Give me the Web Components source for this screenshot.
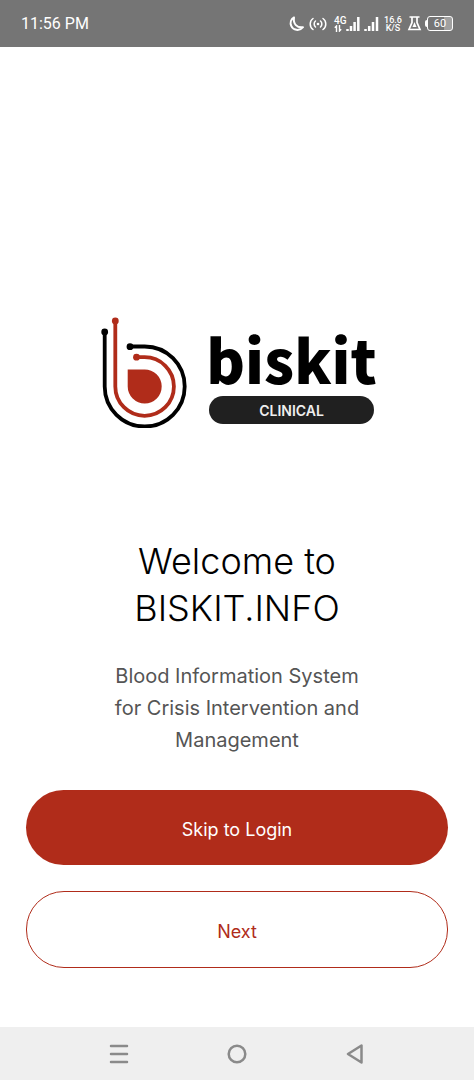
<!DOCTYPE html>
<html lang="en">
<head>
<meta charset="utf-8">
<meta name="viewport" content="width=device-width, initial-scale=1">
<title>BISKIT.INFO</title>
<style>
  html, body { height: 100%; margin: 0; background: #fff; }
  body { font-family: Inter, "Liberation Sans", sans-serif; }
</style>
</head>
<body>
<welcome-screen></welcome-screen>
<script>
const define = (name, html) => {
  const template = document.createElement('template');
  template.innerHTML = html;
  customElements.define(name, class extends HTMLElement {
    constructor() {
      super();
      this.attachShadow({ mode: 'open' }).append(template.content.cloneNode(true));
    }
  });
};

define('status-bar', `
  <style>
    :host { display: flex; align-items: center; justify-content: space-between; height: 47px;
      padding: 0 21px; background: #757575; color: #fff; font-family: Roboto, sans-serif; font-size: 16px; box-sizing: border-box; }
    .icons { display: flex; align-items: center; }
    svg { display: block; fill: none; stroke: #fff; }
    .gen, .speed { font-weight: 500; font-size: 10px; line-height: 9px; text-align: center; }
    .gen { display: grid; justify-items: start; margin-left: 7px; width: 12px; }
    .speed { font-size: 9px; line-height: 8px; margin-left: 5px; width: 18px; }
    .battery { display: flex; align-items: center; margin-left: 3px; }
    .cell { box-sizing: border-box; width: 26px; height: 15px; border: 1px solid #fff; border-radius: 3px;
      font-size: 11px; line-height: 14px; text-align: center; background: linear-gradient(90deg, #757575 65%, #a0a0a0 65%); }
    .cap { width: 2px; height: 7px; border-radius: 2px 0 0 2px; background: #fff; }
  </style>
  <time>11:56 PM</time>
  <div class="icons">
    <svg width="16" height="16" viewBox="0 0 16 16" stroke-width="2" stroke-linejoin="round"><path d="M5 1.500C2 3 .8 6.500 2.300 10 4 14.300 10.500 15.500 14 11.200 8 12 4 8 5 1.500Z"/></svg>
    <svg style="margin-left:4px" width="18" height="14" viewBox="0 0 18 14" stroke-width="1.500" stroke-linecap="round"><path d="M4 1.500C.3 4 .3 10 4 12.500M6.500 4C4.700 5.500 4.700 8.500 6.500 10M14 1.500C17.700 4 17.700 10 14 12.500M11.500 4C13.300 5.500 13.300 8.500 11.500 10"/><circle cx="9" cy="7" r="1.300" fill="#fff" stroke="none"/></svg>
    <div class="gen"><span>4G</span><svg width="8" height="7" viewBox="0 0 8 7" stroke-width="1.400"><path d="M2.500 7V1L.8 2.700M5.500 0V6L7.200 4.300"/></svg></div>
    <svg width="14" height="16" viewBox="0 0 14 16" stroke-width="2.500"><path d="M1.500 15V13M5 15V10M8.600 15V6M12.300 15V1"/></svg>
    <svg style="margin-left:4px" width="15" height="16" viewBox="0 0 15 16" stroke-width="2.500"><path d="M1.500 15V13M5.200 15V10M9 15V6M13 15V1"/></svg>
    <div class="speed">16.6<br>K/S</div>
    <svg style="margin-left:5px" width="15" height="15" viewBox="0 0 15 15" stroke-width="1.700"><path d="M2.500 1H12.500M5 1V6.500L2 13.500H13L10 6.500V1"/><path d="M7.500 6 5.500 11H9.500Z" fill="#fff" stroke="none"/></svg>
    <div class="battery"><span class="cap"></span><span class="cell">60</span></div>
  </div>
`);

define('brand-logo', `
  <style>
    :host { display: flex; justify-content: center; gap: 21px; }
    svg { display: block; flex: none; }
    .words { display: flex; flex-direction: column; width: 165px; padding-top: 11px; box-sizing: border-box; }
    .name { display: flex; justify-content: center; margin-bottom: 5px; font-family: "Noto Sans CJK SC", sans-serif;
      font-weight: 900; font-size: 59px; line-height: 64px; color: #000; white-space: nowrap; }
    .tag { height: 28px; border-radius: 14px; background: #202020; color: #eee; font-weight: 600; font-size: 14px;
      line-height: 29px; text-align: center; }
  </style>
  <svg width="88" height="112" viewBox="0 0 88 112" fill="none" stroke-width="3.800" aria-hidden="true">
    <g stroke="#000"><path d="M4.700 16V70.500A40 40 0 1 0 44.700 30.500H30"/></g>
    <g fill="#000"><circle cx="4.700" cy="16" r="3.400"/><circle cx="30" cy="30.700" r="3.400"/></g>
    <g stroke="#b02c1a"><path d="M15.300 5V70.500A29.300 29.300 0 1 0 44.600 41.200H37"/></g>
    <g fill="#b02c1a"><circle cx="15.300" cy="5" r="3.400"/><circle cx="36.500" cy="41.200" r="3.400"/><path d="M27.700 53.500H44.500A17 17 0 1 1 27.700 70.500Z"/></g>
  </svg>
  <div class="words"><span class="name">biskit</span><span class="tag">CLINICAL</span></div>
`);

define('pill-button', `
  <style>
    :host { display: block; }
    button { display: block; width: 100%; height: 75px; padding: 4px 0 0; border: 0; border-radius: 38px; background: #b02c1a; color: #fff; font: inherit; font-size: 18px; line-height: 24px; cursor: pointer; }
    :host([outlined]) button { height: 77px; border: 1px solid #b02c1a; background: #fff; color: #b02c1a; }
  </style>
  <button type="button"><slot></slot></button>
`);

define('nav-bar', `
  <style>
    :host { display: grid; grid-template-columns: repeat(3, 118px); justify-content: center; align-items: center; height: 53px; background: #efefef; }
    button { display: grid; place-items: center; height: 53px; padding: 0; border: 0; background: none; }
    svg { display: block; fill: none; stroke: #8a8a8a; stroke-width: 2.500; stroke-linecap: round; stroke-linejoin: round; }
  </style>
  <button type="button" aria-label="Recent apps"><svg width="20" height="20" viewBox="0 0 20 20"><path d="M2 2H18M2 10H18M2 18H18"/></svg></button>
  <button type="button" aria-label="Home"><svg width="20" height="20" viewBox="0 0 20 20"><circle cx="10" cy="10" r="8.300"/></svg></button>
  <button type="button" aria-label="Back"><svg width="20" height="20" viewBox="0 0 20 20"><path d="M16.500 1.500V18.500L3 10Z"/></svg></button>
`);

define('welcome-screen', `
  <style>
    :host { display: flex; flex-direction: column; min-height: 100%; }
    main { flex: 1; display: flex; flex-direction: column; justify-content: flex-end; padding: 0 26px 59px; }
    h1 { margin: 110px auto 0; max-width: 260px; font-weight: 300; font-size: 36px; line-height: 47px; text-align: center; color: #000; }
    p { margin: 28px auto 34px; max-width: 270px; font-weight: 400; font-size: 20px; line-height: 32px; text-align: center; color: #555; }
    .actions { display: grid; gap: 26px; }
  </style>
  <status-bar></status-bar>
  <main>
    <brand-logo role="img" aria-label="biskit clinical"></brand-logo>
    <h1>Welcome to BISKIT.INFO</h1>
    <p>Blood Information System for Crisis Intervention and Management</p>
    <div class="actions">
      <pill-button>Skip to Login</pill-button>
      <pill-button outlined>Next</pill-button>
    </div>
  </main>
  <nav-bar></nav-bar>
`);
</script>
</body>
</html>
